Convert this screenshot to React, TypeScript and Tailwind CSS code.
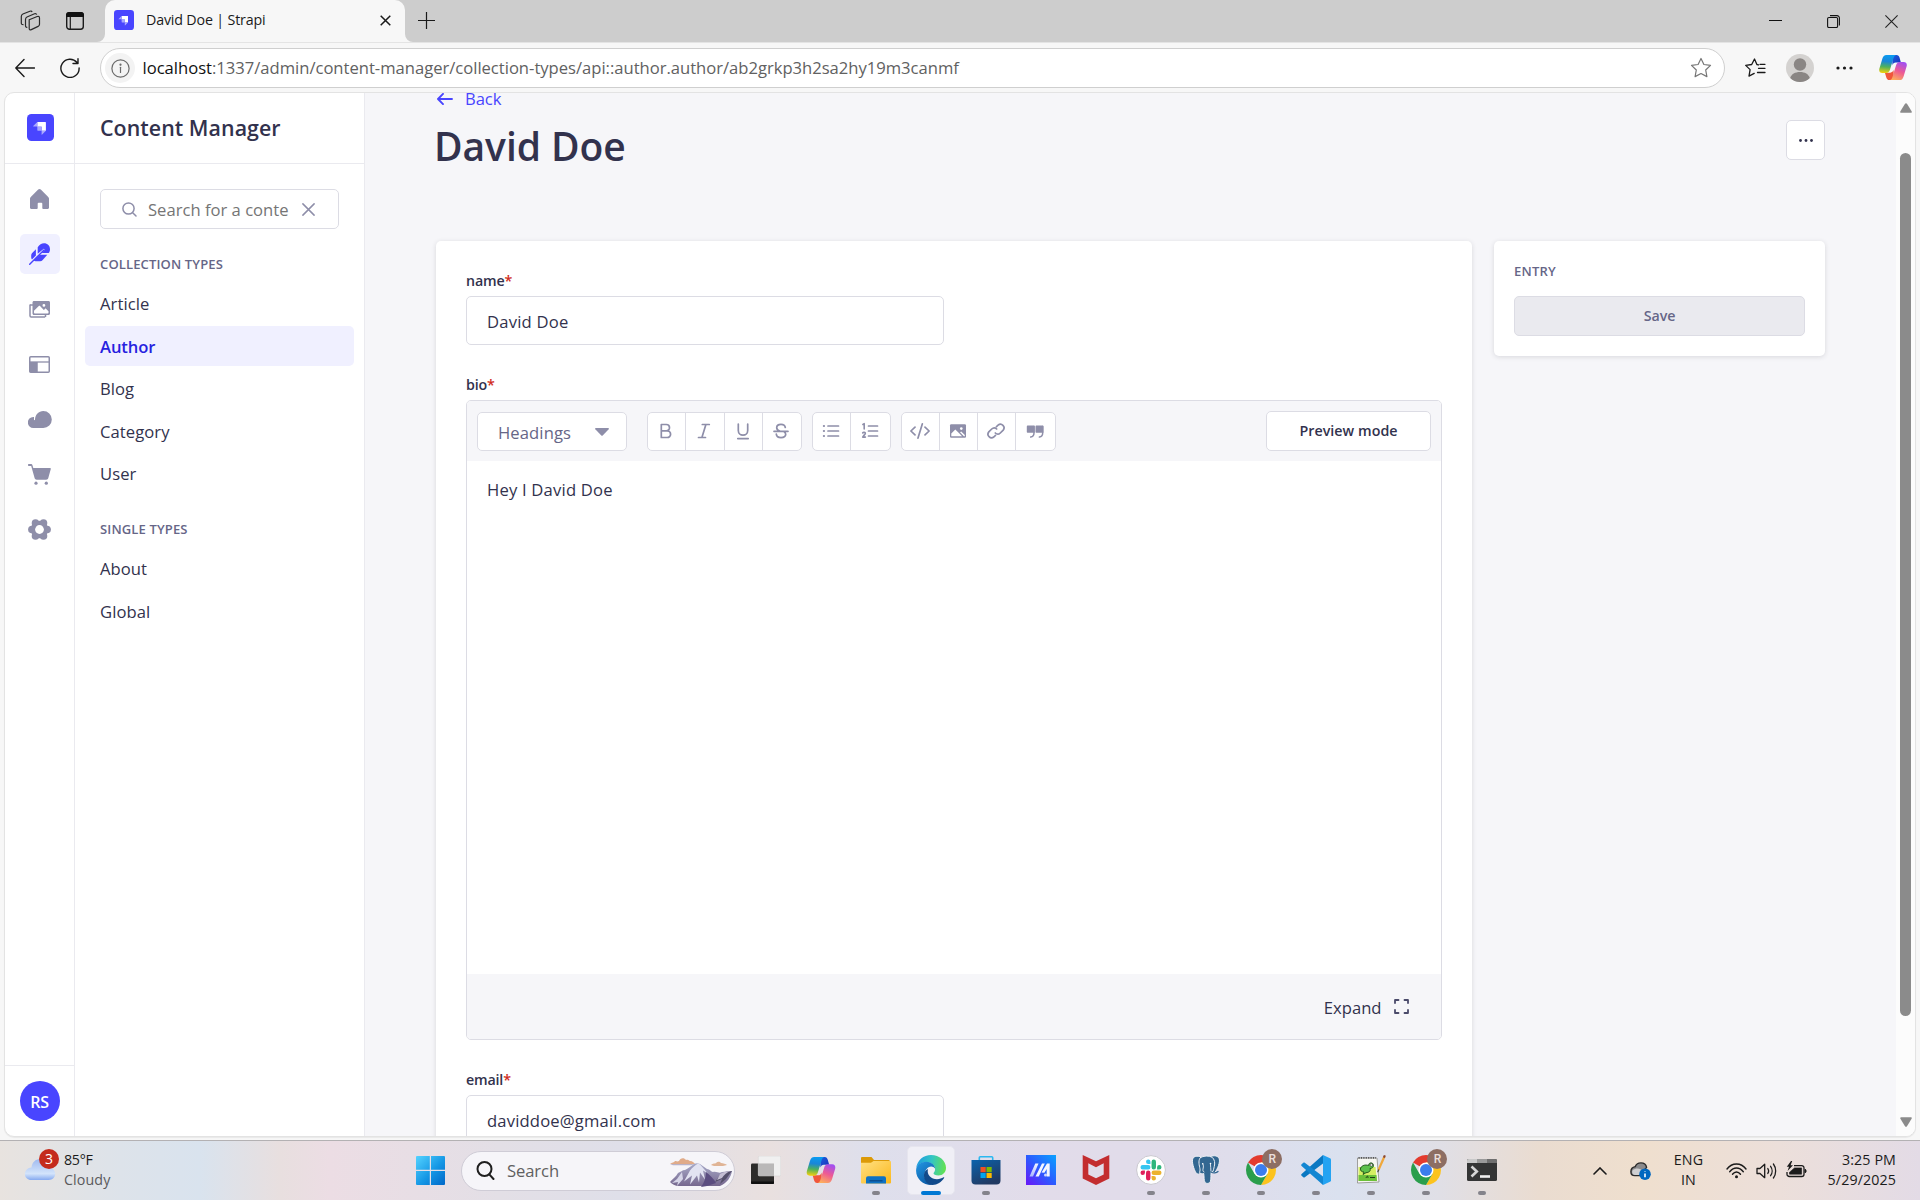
import React from "react";

/* ---------- shared logos ---------- */

function StrapiLogo({ className }: { className: string }) {
  return (
    <svg className={className} viewBox="0 0 27 27">
      <rect width="27" height="27" rx="4.500" fill="#4945ff" />
      <path d="M10.300 8.100h8.100c.3 0 .5.200.5.500v8.200h-4.300v-4.100h-4.300z" fill="#fff" />
      <path d="M10.300 8.100v4.400H6.400c-.3 0-.4-.3-.2-.4z" fill="#a9a7ff" />
      <path d="M14.600 16.800h4.300l-4 4c-.1.100-.3.100-.3-.2z" fill="#a9a7ff" />
      <path d="M10.300 12.600h4.100c.1 0 .2.100.2.200v4h-3.800c-.3 0-.5-.2-.5-.5z" fill="#a9a7ff" />
    </svg>
  );
}

function Copilot({ id, className }: { id: string; className: string }) {
  return (
    <svg className={className} viewBox="0 0 30 28">
      <defs>
        <linearGradient id={`${id}a`} x1=".4" y1="0" x2=".3" y2="1">
          <stop offset="0" stopColor="#0a9bf0" />
          <stop offset=".35" stopColor="#1a86d8" />
          <stop offset=".65" stopColor="#4eb15c" />
          <stop offset="1" stopColor="#f5cf0c" />
        </linearGradient>
        <linearGradient id={`${id}b`} x1=".7" y1="0" x2=".3" y2="1">
          <stop offset="0" stopColor="#a24ff0" />
          <stop offset=".5" stopColor="#ee5a93" />
          <stop offset="1" stopColor="#fdae5c" />
        </linearGradient>
        <linearGradient id={`${id}c`} x1="0" y1="0" x2="1" y2="1">
          <stop offset="0" stopColor="#1b5fdf" />
          <stop offset="1" stopColor="#1a2fb8" />
        </linearGradient>
      </defs>
      <path d="M14 0h4.800c1.800 0 2.700 1.200 3.200 2.800L23.500 8H18c-2 0-3 1-3.600 3z" fill={`url(#${id}c)`} />
      <path d="M16 27H11c-1.800 0-2.700-1.200-3.200-2.800L6.300 19h5.700c2 0 3-1 3.600-3z" fill="#f0563b" />
      <path d="M8 0h10.500c-1.700.3-2.400 1.800-3 3.600l-3.700 12.100c-.7 2.300-1.900 3.700-4.200 3.700H3.500C.9 19.400-.4 17.500.3 14.800L3.600 3.900C4.400 1.400 5.500 0 8 0z" fill={`url(#${id}a)`} />
      <path d="M22 27H11.500c1.700-.3 2.400-1.800 3-3.600l3.700-12.100c.7-2.300 1.900-3.700 4.200-3.700h4.100c2.600 0 3.900 1.900 3.200 4.600l-3.300 10.900c-.8 2.500-1.900 3.900-4.400 3.900z" fill={`url(#${id}b)`} />
    </svg>
  );
}

/* ---------- browser chrome ---------- */

function TabStrip() {
  return (
    <div className="flex h-[42px] items-center bg-[#cdcdcd]">
      <div className="mb-px flex w-[105px] items-center pl-5">
        <svg className="size-[21px]" viewBox="0 0 21 21" fill="none" stroke="#2b2b2b" strokeWidth="1.200">
          <path d="M9.200 9.800l8-3.300c1.300-.5 2.300 0 2.300 1.400v6.300c0 1-.5 1.700-1.400 2.200l-6.800 3.200c-1.300.6-2.100.1-2.100-1.200z" />
          <path d="M7.300 17.300c-1.100.2-1.800-.3-1.800-1.500V9.500c0-1.300.5-2 1.500-2.500l7.500-3.200c1-.4 1.900-.1 2.200.9" />
          <path d="M3.500 14.700c-1.500.1-2.200-.4-2.200-1.700V6.600c0-1.300.5-2.100 1.600-2.600l7-2.800c1-.4 1.800-.2 2.200.8" />
        </svg>
        <svg className="ml-[25px] size-[18px]" viewBox="0 0 18 18">
          <rect x=".7" y=".7" width="16.600" height="16.600" rx="2.800" fill="none" stroke="#1a1a1a" strokeWidth="1.400" />
          <path d="M0 5V3a3 3 0 0 1 3-3h12a3 3 0 0 1 3 3v2z" fill="#111" />
          <path d="M4.300 5v12.500" stroke="#1a1a1a" strokeWidth="1.200" />
        </svg>
      </div>
      <div className="relative flex h-full w-[300px] items-center rounded-t-[10px] bg-[#f7f7f7] pl-[9px]">
        <svg className="absolute bottom-0 -left-2 size-2" viewBox="0 0 8 8"><path d="M8 0v8H0a8 8 0 0 0 8-8z" fill="#f7f7f7" /></svg>
        <svg className="absolute bottom-0 -right-2 size-2" viewBox="0 0 8 8"><path d="M0 0v8h8a8 8 0 0 1-8-8z" fill="#f7f7f7" /></svg>
        <StrapiLogo className="mb-0.5 size-5" />
        <span className="mb-0.5 ml-[12px] w-[234px] text-[14.25px] tracking-[-0.17px] text-[#1b1b1b]">David Doe | Strapi</span>
        <svg className="mb-px size-[11px]" viewBox="0 0 11 11" stroke="#1a1a1a" strokeWidth="1.500"><path d="M.7.700l9.600 9.600M10.300.7L.7 10.300" /></svg>
      </div>
      <svg className="mb-0.5 ml-[13px] size-[17px]" viewBox="0 0 17 17" stroke="#1a1a1a" strokeWidth="1.200"><path d="M8.500 0v17M0 8.500h17" /></svg>
      <div className="ml-auto flex items-center pr-[22px]">
        <svg className="size-[13px]" viewBox="0 0 13 13" stroke="#111" strokeWidth="1"><path d="M0 5.500h13" /></svg>
        <svg className="ml-[45px] size-[13px]" viewBox="0 0 13 13" fill="none" stroke="#111" strokeWidth="1.100">
          <rect x=".6" y="2.500" width="10" height="10" rx="1.300" />
          <path d="M3 .6h7a2.400 2.400 0 0 1 2.400 2.400v7.500" />
        </svg>
        <svg className="ml-[45px] size-[13px]" viewBox="0 0 13 13" stroke="#222" strokeWidth="1.100"><path d="M.4.400l12.200 12.200M12.600.4L.4 12.600" /></svg>
      </div>
    </div>
  );
}

function AddressBar() {
  return (
    <div className="flex h-[50px] items-center border-t border-[#e4e4e4] pl-[15px] pt-px">
      <svg className="size-5" viewBox="0 0 20 20" fill="none" stroke="#1a1a1a" strokeWidth="1.400" strokeLinecap="round" strokeLinejoin="round">
        <path d="M9 1.500L.8 10 9 18.500M.8 10H19.500" />
      </svg>
      <svg className="ml-[25px] size-5" viewBox="0 0 20 20" fill="none" stroke="#1a1a1a" strokeWidth="1.400" strokeLinecap="round" strokeLinejoin="round">
        <path d="M17 4.500A9.100 9.100 0 1 0 19.100 10M18 .8v4.700h-5" />
      </svg>
      <div className="ml-5 flex h-10 w-[1625px] items-center rounded-full border border-[#cfcfcf] bg-white pl-1">
        <span className="flex size-[30px] items-center justify-center rounded-full bg-[#f3f3f3]">
          <svg className="size-[19px]" viewBox="0 0 19 19" fill="none" stroke="#6a6a6a" strokeWidth="1.200">
            <circle cx="9.500" cy="9.500" r="8.600" />
            <path d="M9.500 8.300v5.200" strokeLinecap="round" />
            <circle cx="9.500" cy="5.700" r=".5" fill="#6a6a6a" />
          </svg>
        </span>
        <span className="ml-[7.500px] whitespace-nowrap text-[16.625px] font-[380] tracking-[-0.015px] text-[#616161]">
          <span className="text-[#111]">localhost</span>:1337/admin/content-manager/collection-types/api::author.author/ab2grkp3h2sa2hy19m3canmf
        </span>
        <svg className="ml-auto mr-[12px] size-[22px]" viewBox="0 0 22 22" fill="none" stroke="#767676" strokeWidth="1.200" strokeLinejoin="round">
          <path d="M11 1.500l2.900 6 6.600.9-4.800 4.600 1.200 6.600L11 16.500l-5.900 3.100 1.200-6.600L1.500 8.400l6.600-.9z" />
        </svg>
      </div>
      <svg className="ml-[19px] h-5 w-[22px]" viewBox="0 0 22 20" fill="none" stroke="#1a1a1a" strokeWidth="1.300" strokeLinejoin="round" strokeLinecap="round">
        <path d="M14.500 6.900l-1.600-.4L10.500 1 7.700 6.500l-6 .9 4.400 4.200-1.100 6.500 5.200-2.700M14.500 10.300h6.500M13.500 14.500h7.500M16 6.300h5" />
      </svg>
      <svg className="ml-5 size-[28px]" viewBox="0 0 28 28">
        <circle cx="14" cy="14" r="14" fill="#d4d2d0" />
        <circle cx="14" cy="10.500" r="6.200" fill="#8a8684" />
        <path d="M4.200 24C5.500 20 9 18 14 18s8.500 2 9.800 6a14 14 0 0 1-19.600 0z" fill="#8a8684" />
      </svg>
      <svg className="ml-[22px] h-1 w-[17px]" viewBox="0 0 17 4" fill="#1a1a1a"><circle cx="2" cy="2" r="1.600" /><circle cx="8.500" cy="2" r="1.600" /><circle cx="15" cy="2" r="1.600" /></svg>
      <Copilot id="bar" className="ml-[26px] h-[26px] w-[28px]" />
    </div>
  );
}

/* ---------- admin panel ---------- */

const railIcons: React.ReactNode[] = [
  <svg key="home" className="h-5 w-[19px]" viewBox="0 0 19 20"><path d="M9.500 0c.5 0 .9.200 1.300.6l7.200 7.100c.6.600 1 1.100 1 2.100V18.500c0 .9-.6 1.500-1.500 1.500h-4.300c-.6 0-.9-.3-.9-.9v-4.400c0-.6-.3-.9-.9-.9H8.600c-.6 0-.9.3-.9.900v4.400c0 .6-.3.900-.9.900H1.500C.6 20 0 19.400 0 18.500V9.800c0-1 .4-1.500 1-2.100L8.200.6c.4-.4.800-.6 1.300-.6z" fill="#8e8ea9" /></svg>,
  <svg key="feather" className="h-[22px] w-[21px]" viewBox="0 0 21 22">
    <path d="M.7 21.300L15 7" stroke="#4945ff" strokeWidth="1.400" strokeLinecap="round" />
    <g fill="#4945ff">
      <path d="M8.700 10.800V4.300C10.500 1.500 12.500.300 15 .300c3.500 0 6 2.600 6 5.900 0 1.400-.4 2.600-1.300 3.800h-7.200l3.300-3.300-1-1z" />
      <path d="M6.900 6.200v6.400L3 16.500c-.6-.6-.8-1.300-.8-2.300v-1.800c0-1 .3-1.700 1-2.400z" />
      <path d="M10.700 11.700h7.600l-4.600 5.400c-.7.8-1.600 1.200-2.600 1.200H7.300c-1.300 0-2-.2-2.700-.7z" />
    </g>
  </svg>,
  <svg key="media" className="h-[17px] w-[21px]" viewBox="0 0 21 17">
    <path d="M1 3.500v11.300c0 .8.400 1.200 1.200 1.200h14" fill="none" stroke="#8e8ea9" strokeWidth="1.500" />
    <path d="M1 4h3M16.500 16v-2" fill="none" stroke="#8e8ea9" strokeWidth="1.500" />
    <path fillRule="evenodd" d="M5 0h14.500c.9 0 1.500.6 1.500 1.500v11c0 .9-.6 1.500-1.500 1.500H5c-.9 0-1.500-.6-1.500-1.500v-11C3.500.6 4.100 0 5 0zm0 9.800v1.900c0 .5.300.8.800.8h12.900c.5 0 .8-.3.800-.8v-1.500l-2.300-2.300c-.4-.4-.8-.4-1.200 0l-1.200 1.200L11 5c-.4-.4-.8-.4-1.200 0zM14.900 3a1.400 1.400 0 1 0 0 2.800 1.400 1.400 0 0 0 0-2.800z" fill="#8e8ea9" />
  </svg>,
  <svg key="layout" className="h-[17px] w-[21px]" viewBox="0 0 21 17">
    <rect x=".75" y=".75" width="19.500" height="15.500" rx="1" fill="none" stroke="#8e8ea9" strokeWidth="1.500" />
    <path d="M.7 6h19.600" stroke="#8e8ea9" strokeWidth="1.300" />
    <rect x=".75" y="6" width="8" height="10.300" fill="#8e8ea9" />
  </svg>,
  <svg key="cloud" className="h-[17px] w-6" viewBox="0 0 24 17">
    <path d="M15.300 0a8.500 8.500 0 0 1 0 17H5.500A5.500 5.500 0 0 1 5.300 5.900L6 5.900V8.700c0 .6.900.6 1 0C7.100 3.800 10.700 0 15.300 0z" fill="#8e8ea9" />
  </svg>,
  <svg key="cart" className="h-[21px] w-[23px]" viewBox="0 0 23 21" fill="#8e8ea9">
    <path d="M.6 0h2.600c.6 0 1 .3 1.200.9L5.300 4H22c.7 0 1 .4.800 1l-2.500 9c-.3 1.100-1 1.700-2.200 1.700H8.700c-1.100 0-1.800-.6-2.100-1.700L3.200 1.900H.6C-.2 1.900-.2 0 .6 0z" />
    <circle cx="8" cy="19.200" r="1.600" /><circle cx="18.300" cy="19.200" r="1.600" />
  </svg>,
  <svg key="cog" className="size-[23px]" viewBox="0 0 23 23" fill="#8e8ea9">
    <circle cx="11.500" cy="11.500" r="8.700" />
    <circle cx="3.900" cy="11.500" r="3.800" /><circle cx="19.100" cy="11.500" r="3.800" />
    <circle cx="7.500" cy="5" r="3.800" /><circle cx="15.500" cy="5" r="3.800" />
    <circle cx="7.500" cy="18" r="3.800" /><circle cx="15.500" cy="18" r="3.800" />
    <circle cx="11.500" cy="11.500" r="4.400" fill="#fff" />
  </svg>,
];

function Rail() {
  return (
    <div className="flex w-[70px] shrink-0 flex-col border-r border-[#eaeaef]">
      <div className="flex h-[71px] items-center justify-center border-b border-[#eaeaef] pb-px pl-px">
        <StrapiLogo className="size-[27px]" />
      </div>
      <nav className="flex flex-col items-center gap-[15px] pt-[15px]">
        {railIcons.map((icon, i) => (
          <div key={i} className={i === 1 ? "flex size-10 items-center justify-center rounded-[5px] bg-[#f0f0ff]" : "flex size-10 items-center justify-center"}>
            {icon}
          </div>
        ))}
      </nav>
      <div className="mt-auto flex h-[71px] items-center justify-center border-t border-[#eaeaef]">
        <div className="flex size-10 items-center justify-center rounded-full bg-[#4945ff] pt-px text-[16px] font-semibold tracking-[-0.2px] text-white">RS</div>
      </div>
    </div>
  );
}

function NavGroup({ title, items, active }: { title: string; items: string[]; active?: string }) {
  return (
    <div>
      <h3 className="pl-[15px] text-[13.06px] leading-5 font-[560] tracking-[0.12px] text-[#666687]">{title}</h3>
      <ul className="mt-[9.500px] flex flex-col gap-[2.500px]">
        {items.map((item) => (
          <li
            key={item}
            className={
              item === active
                ? "flex h-10 items-center rounded-[5px] bg-[#f0f0ff] pt-0.5 pl-[15px] text-[16.625px] font-semibold tracking-[-0.1px] text-[#271fe0]"
                : "flex h-10 items-center pt-[2.600px] pl-[15px] text-[16.625px] font-[380] tracking-[0.07px] text-[#32324d]"
            }
          >
            {item}
          </li>
        ))}
      </ul>
    </div>
  );
}

function SideNav() {
  return (
    <div className="flex w-[290px] shrink-0 flex-col border-r border-[#eaeaef]">
      <div className="flex h-[71px] items-center border-b border-[#eaeaef] pl-[25px]">
        <h2 className="text-[21.375px] font-[580] tracking-[0.05px] text-[#32324d]">Content Manager</h2>
      </div>
      <div className="mt-[25px] ml-[25px] flex h-10 w-[239px] items-center rounded-[5px] border border-[#dcdce4]">
        <svg className="ml-[21px] size-[15px]" viewBox="0 0 15 15" fill="none" stroke="#8e8ea9" strokeWidth="1.500" strokeLinecap="round"><circle cx="6.500" cy="6.500" r="5.600" /><path d="M10.700 10.700L14 14" /></svg>
        <span className="ml-[11px] w-[141px] overflow-hidden whitespace-nowrap pt-0.5 text-[16.625px] font-[380] text-[#757575]">Search for a conte</span>
        <svg className="ml-[12.500px] size-[13px]" viewBox="0 0 13 13" stroke="#8e8ea9" strokeWidth="1.500" strokeLinecap="round"><path d="M.9.900l11.200 11.200M12.100.9L.9 12.100" /></svg>
      </div>
      <div className="mt-[25px] flex flex-col gap-[25.500px] px-2.5">
        <NavGroup title="COLLECTION TYPES" items={["Article", "Author", "Blog", "Category", "User"]} active="Author" />
        <NavGroup title="SINGLE TYPES" items={["About", "Global"]} />
      </div>
    </div>
  );
}

function Label({ text }: { text: string }) {
  return (
    <div className="text-[14.25px] leading-5 font-[570] tracking-[-0.17px] text-[#32324d]">
      {text}<span className="text-[#d02b20]">*</span>
    </div>
  );
}

function ToolGroup({ children }: { children: React.ReactNode }) {
  return <div className="flex h-[39px] divide-x divide-[#dcdce4] overflow-hidden rounded-[5px] border border-[#dcdce4] bg-white">{children}</div>;
}

function Tool({ children }: { children: React.ReactNode }) {
  return (
    <div className="flex w-[38.250px] items-center justify-center pr-px pb-px">
      <svg className="size-5" viewBox="0 0 20 20" fill="none" stroke="#8e8ea9" strokeWidth="1.700" strokeLinecap="round" strokeLinejoin="round">{children}</svg>
    </div>
  );
}

function Editor() {
  return (
    <div className="mt-[5px] flex h-[640px] flex-col overflow-hidden rounded-[5px] border border-[#dcdce4]">
      <div className="flex h-[60px] shrink-0 items-center bg-[#f6f6f9] px-2.5 pt-px">
        <div className="flex h-[39px] w-[150px] items-center rounded-[5px] border border-[#dcdce4] bg-white">
          <span className="ml-5 pt-[3px] text-[16.625px] font-[380] tracking-[0.1px] text-[#666687]">Headings</span>
          <svg className="ml-[24px] h-[8px] w-[14px]" viewBox="0 0 14 8"><path d="M.9 0h12.200c.8 0 1.100.7.600 1.300L7.700 7.500c-.4.400-1 .4-1.400 0L.300 1.300C-.2.700.1 0 .9 0z" fill="#8e8ea9" /></svg>
        </div>
        <div className="ml-5 flex gap-2.5">
          <ToolGroup>
            <Tool><path d="M5.300 3.500v13h6a3.300 3.300 0 0 0 0-6.600h-6 5a3.200 3.200 0 0 0 0-6.400z" /></Tool>
            <Tool><path d="M8.300 3.500h7M4.500 16.500h7M11.900 3.500l-4 13" /></Tool>
            <Tool><path d="M5.300 3v6.500a4.700 4.700 0 0 0 9.400 0V3M4.800 17.600h10.400" /></Tool>
            <Tool><path d="M3 10.300h14M14.300 6.500C14 4.600 12.300 3.400 10 3.400 7.500 3.400 5.700 4.700 5.700 6.700c0 2 1.500 2.900 3.500 3.500M5.300 13.200c.2 2 2 3.400 4.700 3.400 2.800 0 4.700-1.300 4.700-3.300 0-1.300-.7-2.300-1.900-2.900" /></Tool>
          </ToolGroup>
          <ToolGroup>
            <Tool><path d="M7 5h10.500M7 10h10.500M7 15h10.500" /><path d="M2.900 5h.1M2.900 10h.1M2.900 15h.1" strokeWidth="2.200" /></Tool>
            <Tool><path d="M8.500 5h9M8.500 10h9M8.500 15h9" /><path d="M2.900 3.500l1.300-.8v5.300M2.700 12c.6-1.100 2.800-.9 2.600.4-.1.900-1.600 2-2.600 3.700h2.700" strokeWidth="1.600" /></Tool>
          </ToolGroup>
          <ToolGroup>
            <Tool><path d="M5 6.200L.9 10 5 13.800M15 6.200l4.100 3.800L15 13.800M12.300 2.900L8 17.100" /></Tool>
            <Tool><rect x="2" y="3.200" width="16" height="13.600" rx="1.200" fill="#8e8ea9" stroke="none" /><path d="M3.300 15.300v-2.800l4-4L11.400 12.600l2.700 2.700zM12 11.200l1.200-.8 3.600 3.600v1.300h-.9z" fill="#fff" stroke="none" /><circle cx="13.300" cy="7.600" r="1.300" fill="#fff" stroke="none" /></Tool>
            <Tool><path d="M10.500 5.700l1.700-1.700a3.600 3.600 0 0 1 5 5.100L14.300 12a3.600 3.600 0 0 1-5 0M9.500 14.300L7.800 16a3.600 3.600 0 0 1-5-5.100L5.700 8a3.600 3.600 0 0 1 5 0" /></Tool>
            <Tool><path d="M9 5.500v6.300c0 2.500-1.400 4-3.300 4.300M17.700 5.500v6.300c0 2.500-1.400 4-3.300 4.300" strokeWidth="1.500" /><path d="M2.800 4.400H9.200c.3 0 .5.200.5.500v6.800H2.900c-.7 0-1.100-.4-1.100-1V5.500c0-.7.400-1.100 1-1.100zM11.500 4.400h6.400c.3 0 .5.200.5.500v6.800h-6.800c-.7 0-1.100-.4-1.100-1V5.500c0-.7.400-1.100 1-1.100z" fill="#8e8ea9" stroke="none" /></Tool>
          </ToolGroup>
        </div>
        <div className="mb-px ml-auto flex h-10 w-[165px] items-center justify-center rounded-[5px] border border-[#dcdce4] bg-white text-[14.25px] font-[580] tracking-[0.05px] text-[#32324d]">Preview mode</div>
      </div>
      <div className="flex-1 bg-white pt-4 pl-5 text-[16.625px] leading-[26px] font-[380] tracking-[0.2px] text-[#32324d]">Hey I David Doe</div>
      <div className="flex h-[65px] shrink-0 items-center justify-end bg-[#f6f6f9] pr-[32.500px]">
        <span className="pt-[3px] text-[16.625px] font-[380] text-[#32324d]">Expand</span>
        <svg className="mb-px ml-3 size-[15px]" viewBox="0 0 15 15" fill="none" stroke="#4a4a6a" strokeWidth="1.800" strokeLinecap="round" strokeLinejoin="round"><path d="M1 4V1h3.500M10.500 1H14v3M14 11v3h-3.500M4.500 14H1v-3" /></svg>
      </div>
    </div>
  );
}

function MainPane() {
  return (
    <main className="min-w-0 flex-1 overflow-hidden bg-[#f6f6f9] pl-[71px]">
      <div className="-mt-1.5 flex h-6 items-center gap-[12px] text-[16.625px] font-[380] tracking-[-0.05px] text-[#4945ff]">
        <svg className="ml-px h-3 w-4" viewBox="0 0 16 12" fill="none" stroke="#4945ff" strokeWidth="1.900" strokeLinecap="round" strokeLinejoin="round"><path d="M6 .9L1 6l5 5.100M1.200 6H15" /></svg>
        Back
      </div>
      <div className="mt-[9px] flex h-[50px] w-[1389px] items-start justify-between">
        <h1 className="-ml-[2px] text-[39px] leading-[52px] font-[590] tracking-[-0.05px] text-[#32324d]">David Doe</h1>
        <div className="flex h-10 w-[39px] items-center justify-center rounded-[5px] border border-[#dcdce4] bg-white">
          <svg className="h-[3px] w-[14px]" viewBox="0 0 14 3" fill="#32324d"><circle cx="1.500" cy="1.500" r="1.400" /><circle cx="7" cy="1.500" r="1.400" /><circle cx="12.500" cy="1.500" r="1.400" /></svg>
        </div>
      </div>
      <div className="mt-[71px] flex items-start gap-[22px]">
        <section className="h-[960px] w-[1036px] rounded-[5px] bg-white px-[30px] pt-[30px] shadow-[0_1px_5px_rgba(33,33,52,0.14)]">
          <Label text="name" />
          <div className="mt-[5px] flex h-[49px] w-[478px] items-center rounded-[5px] border border-[#dcdce4] pt-[3px] pl-5 text-[16.625px] font-[380] tracking-[0.2px] text-[#32324d]">David Doe</div>
          <div className="mt-[30px]"><Label text="bio" /></div>
          <Editor />
          <div className="mt-[30px]"><Label text="email" /></div>
          <div className="mt-[5px] flex h-[49px] w-[478px] items-center rounded-[5px] border border-[#dcdce4] pt-[3px] pl-5 text-[16.625px] font-[380] tracking-[0.16px] text-[#32324d]">daviddoe@gmail.com</div>
        </section>
        <aside className="h-[115px] w-[331px] rounded-[5px] bg-white px-5 pt-5 shadow-[0_1px_5px_rgba(33,33,52,0.14)]">
          <h2 className="text-[13.06px] leading-5 font-[560] tracking-[0.2px] text-[#666687]">ENTRY</h2>
          <div className="mt-[15px] flex h-10 items-center justify-center rounded-[5px] border border-[#dcdce4] bg-[#eaeaef] text-[14.25px] font-[570] tracking-[-0.1px] text-[#666687]">Save</div>
        </aside>
      </div>
    </main>
  );
}

function ScrollBar() {
  return (
    <div className="flex w-[19px] shrink-0 flex-col items-center bg-[#fcfcfc] pt-[10px] pb-[9px]">
      <svg className="h-[10px] w-3" viewBox="0 0 12 10"><path d="M5 .8c.5-.8 1.500-.8 2 0l4.600 7.400c.5.900.1 1.600-.9 1.600H1.300C.300 9.800-.1 9.100.4 8.200z" fill="#8b8b8b" /></svg>
      <div className="mt-10 h-[863px] w-[11px] rounded-full bg-[#8b8b8b]" />
      <svg className="mt-auto h-[10px] w-3" viewBox="0 0 12 10"><path d="M5 9.200c.5.800 1.500.8 2 0l4.600-7.400c.5-.9.1-1.600-.9-1.600H1.300C.300.200-.1.900.4 1.800z" fill="#8b8b8b" /></svg>
    </div>
  );
}

/* ---------- taskbar ---------- */

function WindowsLogo() {
  return (
    <svg className="size-[29px]" viewBox="0 0 29 29">
      <defs><linearGradient id="win" x1="0" y1="0" x2="29" y2="29" gradientUnits="userSpaceOnUse"><stop offset="0" stopColor="#55d3ff" /><stop offset=".55" stopColor="#1597e5" /><stop offset="1" stopColor="#0067c8" /></linearGradient></defs>
      <path d="M1 0h12.800v13.800H0V1a1 1 0 0 1 1-1zM15 0h13a1 1 0 0 1 1 1v12.800H15zM0 15h13.800v14H1a1 1 0 0 1-1-1zM15 15h14v13a1 1 0 0 1-1 1H15z" fill="url(#win)" />
    </svg>
  );
}

function Mountains() {
  return (
    <svg className="h-[31px] w-[62px]" viewBox="0 0 62 31">
      <defs><linearGradient id="mt" x1="0" y1="0" x2="0" y2="1"><stop offset="0" stopColor="#a9abc9" /><stop offset="1" stopColor="#76688f" /></linearGradient></defs>
      <path d="M0 7c2-2 4-1 5-3 2 0 2 1 4 0 1-3 5-4 7-1 3-1 3 1 4 1 3 0 4 2 5 3z" fill="#e0ab89" />
      <path d="M0 7h25l-4 1.300H3z" fill="#b9b3c9" />
      <path d="M41 8c2-2 4-1 5-2 2-2 4-1 5 0 2 0 5 1 6 2l-4 1h-9z" fill="#e0b495" />
      <path d="M0 25c2-3 6-5 8-9 3-1 4-3 7-3 4-2 6-4 9-6 2-1 4-1 6 0l7 5c3 0 4 3 6 3 4-1 6 2 9 0 4 0 6-1 10-1-1 6-5 12-12 15H9c-4 0-7-2-9-4z" fill="url(#mt)" />
      <path d="M28 6.500c-3 2-6 4-8 7l-6 11 8-6-2 9 7-9 2 7 1-10 5 7-2-9 5 3-8-9z" fill="#e2e3f2" />
      <path d="M12 15l-5 7-5 4 6-1-1 4 6-7z" fill="#d6d5e8" />
      <path d="M62 14c-5 0-8 1-12 4l-5 7 7-3-2 5 6-5z" fill="#55506b" />
      <path d="M50 17c3-2 7-3 11-3-4 1-7 4-9 7l-5 2z" fill="#c3bdd2" />
      <path d="M36 15c4 3 8 7 10 11l-9 3-6 1c3-4 5-9 5-15z" fill="#5b4d80" />
    </svg>
  );
}

function TaskView() {
  return (
    <svg className="h-7 w-[30px]" viewBox="0 0 30 28">
      <rect x="0" y="7.500" width="23" height="20.500" rx="1.200" fill="#2c2b2a" />
      <path d="M0 25.500h23V27a1 1 0 0 1-1 1H1a1 1 0 0 1-1-1z" fill="#0f0f0f" />
      <rect x="7.300" y="0" width="22.500" height="20" rx="1.200" fill="#f0f0f0" fillOpacity=".95" stroke="#d3d3d3" strokeWidth=".5" />
      <path d="M7.300 7.500H23V20H8.300a1 1 0 0 1-1-1z" fill="#b9b8b8" />
    </svg>
  );
}

function Folder() {
  return (
    <svg className="h-[27px] w-[30px]" viewBox="0 0 30 27">
      <defs><linearGradient id="fo" x1="0" y1="0" x2="1" y2="1"><stop offset="0" stopColor="#ffe083" /><stop offset="1" stopColor="#fbb81c" /></linearGradient></defs>
      <path d="M1 0h9.500l2.500 3h15.500v4H0V1a1 1 0 0 1 1-1z" fill="#dc9a08" />
      <path d="M0 5.700h10L12.500 4H29a1 1 0 0 1 1 1v20.500a1 1 0 0 1-1 1H1a1 1 0 0 1-1-1z" fill="url(#fo)" />
      <path d="M5 26.500v-5.300a2 2 0 0 1 2-2h16a2 2 0 0 1 2 2v5.300z" fill="#0f72c4" />
      <path d="M8.500 23h13v1.500h-13z" fill="#0a4f92" />
    </svg>
  );
}

function EdgeLogo() {
  return (
    <svg className="size-[30px]" viewBox="0 0 30 30">
      <defs>
        <linearGradient id="ea" x1="0" y1=".4" x2="1" y2=".5"><stop offset="0" stopColor="#1d9be0" /><stop offset=".5" stopColor="#33c5c4" /><stop offset="1" stopColor="#63e24f" /></linearGradient>
        <linearGradient id="eb" x1="0" y1="0" x2=".6" y2="1"><stop offset="0" stopColor="#2298e4" /><stop offset="1" stopColor="#0c59a4" /></linearGradient>
      </defs>
      <path d="M.2 13C1.200 5.300 7.500 0 15 0c8.500 0 15 6 15 12.800 0 4.700-3.300 7.700-7.500 7.700-3.300 0-5-1.200-5-2.200 0-.7 1.600-1.600 1.600-4C19 10 15 7 10.500 7 6 7 2 9.300.2 13z" fill="url(#ea)" />
      <path d="M.1 15C.500 9.500 5 6.700 10.300 6.700c4.800 0 8.600 3 8.800 6.800-1-1.300-2.300-2-3.900-2-3.700 0-6.700 4.200-6.700 8.800 0 4.500 3.300 8.600 8 9.600C7.500 30.500-.3 23.800.1 15z" fill="url(#eb)" />
      <path d="M12 14c-1.600 6 3.200 10.200 9 10.200 2.800 0 4.800-.8 6.500-1.900.5-.3 1 .2.600.7-2.600 4-6.800 6.900-11.600 6.900-5 0-9-4.800-8.500-10.500.2-2.300 1.700-4.400 4-5.400z" fill="#114a8b" />
    </svg>
  );
}

function Store() {
  return (
    <svg className="size-[30px]" viewBox="0 0 30 30">
      <defs><linearGradient id="st" x1="0" y1="0" x2=".5" y2="1"><stop offset="0" stopColor="#0a63ad" /><stop offset="1" stopColor="#213a63" /></linearGradient></defs>
      <path d="M8.300 6V2.800c0-.7.300-1 1-1h11.400c.7 0 1 .3 1 1V6" fill="none" stroke="#2bb8f0" strokeWidth="1.600" />
      <path d="M.5 5h29v20.500a4 4 0 0 1-4 4h-21a4 4 0 0 1-4-4z" fill="url(#st)" />
      <path d="M9.500 12h5.200v5.200H9.500z" fill="#f25022" /><path d="M15.500 12h5.200v5.200h-5.200z" fill="#7fba00" /><path d="M9.500 18h5.200v5H9.500z" fill="#00a4ef" /><path d="M15.500 18h5.200v5h-5.200z" fill="#ffb900" />
    </svg>
  );
}

function MyAsus() {
  return (
    <svg className="size-[30px]" viewBox="0 0 30 30">
      <defs>
        <linearGradient id="ma" x1="0" y1="1" x2="1" y2="0"><stop offset="0" stopColor="#6a16f7" /><stop offset=".5" stopColor="#2b5cff" /><stop offset="1" stopColor="#0aa2ff" /></linearGradient>
        <linearGradient id="mb" x1="0" y1="0" x2="0" y2="1"><stop offset="0" stopColor="#f4f6ff" /><stop offset="1" stopColor="#a9b6ff" /></linearGradient>
      </defs>
      <rect width="30" height="30" fill="url(#ma)" />
      <path d="M3.500 21.500L9.300 8.500h3.200L7 21.500z" fill="url(#mb)" />
      <path d="M9.500 21.500L16 8.500h2.800L12.800 21.500z" fill="#f4f6ff" />
      <path d="M15.500 17.500L21 8.500h2.700v13h-3v-7.500l-2.300 3.800z" fill="#f4f6ff" />
      <circle cx="19.500" cy="20" r="1.500" fill="#cfd7ff" />
    </svg>
  );
}

function McAfee() {
  return (
    <svg className="size-[30px]" viewBox="0 0 30 30">
      <path fillRule="evenodd" d="M1.700 0L15 6.200 28.300 0v23.500L15 30 1.700 23.500zM7.300 8.300v11.200L15 23.200l7.700-3.700V8.300L15 12.200z" fill="#c32d2f" />
    </svg>
  );
}

function Slack() {
  return (
    <svg className="size-[30px]" viewBox="0 0 30 30">
      <circle cx="15" cy="15" r="14.400" fill="#fff" stroke="#c4c3cb" strokeWidth=".9" />
      <g transform="translate(4.500 4.500) scale(.875)">
        <path d="M5.042 15.165a2.528 2.528 0 0 1-2.520 2.523A2.528 2.528 0 0 1 0 15.165a2.527 2.527 0 0 1 2.522-2.520h2.520v2.520zM6.313 15.165a2.527 2.527 0 0 1 2.521-2.520 2.527 2.527 0 0 1 2.521 2.520v6.313A2.528 2.528 0 0 1 8.834 24a2.528 2.528 0 0 1-2.521-2.522v-6.313z" fill="#e01e5a" />
        <path d="M8.834 5.042a2.528 2.528 0 0 1-2.521-2.520A2.528 2.528 0 0 1 8.834 0a2.528 2.528 0 0 1 2.521 2.522v2.520H8.834zM8.834 6.313a2.528 2.528 0 0 1 2.521 2.521 2.528 2.528 0 0 1-2.521 2.521H2.522A2.528 2.528 0 0 1 0 8.834a2.528 2.528 0 0 1 2.522-2.521h6.312z" fill="#36c5f0" />
        <path d="M18.956 8.834a2.528 2.528 0 0 1 2.522-2.521A2.528 2.528 0 0 1 24 8.834a2.528 2.528 0 0 1-2.522 2.521h-2.522V8.834zM17.688 8.834a2.528 2.528 0 0 1-2.523 2.521 2.527 2.527 0 0 1-2.520-2.521V2.522A2.527 2.527 0 0 1 15.165 0a2.528 2.528 0 0 1 2.523 2.522v6.312z" fill="#2eb67d" />
        <path d="M15.165 18.956a2.528 2.528 0 0 1 2.523 2.522A2.528 2.528 0 0 1 15.165 24a2.527 2.527 0 0 1-2.520-2.522v-2.522h2.520zM15.165 17.688a2.527 2.527 0 0 1-2.520-2.523 2.526 2.526 0 0 1 2.520-2.520h6.313A2.527 2.527 0 0 1 24 15.165a2.528 2.528 0 0 1-2.522 2.523h-6.313z" fill="#ecb22e" />
      </g>
    </svg>
  );
}

function Elephant() {
  return (
    <svg className="size-[30px]" viewBox="0 0 30 30" strokeLinecap="round" strokeLinejoin="round">
      <g fill="#336791" stroke="#eef1f6" strokeWidth="1">
        <path d="M19.500 1.500c3.500-1.600 7.600-.7 8.700 2.200 1.200 3.300-1.700 10.500-4.200 13.600-1.100 1.300-2.500.3-2.700-1z" />
        <path d="M10 2C6.200.300 2.200 1 1.500 4.800.9 8.200 3.600 17 6 18.800c1.600 1.100 3-.3 4-1.700z" />
        <path d="M9.500 2.500c3-1.800 8.500-2 11.500-.3 2.700 2 3.300 6 2.200 9.500-.5 1.600-.6 3.700-1.300 4.800l-1.700.7c-.6 2.500.1 6.500-.7 9-.8 2.300-3.800 3-5.400 1.200-1.400-1.700-.8-6.100-1.400-9-1.600.9-4 .2-4.200-1.200.8-1.400.6-3 .2-4.700-.8-3.500-1.500-8 .8-10z" />
      </g>
      <path d="M20.500 17.200c1.700 1.200 5 .8 6.500-.7" fill="none" stroke="#336791" strokeWidth="1.300" />
      <path d="M13 17c-1.500-.4-1.200-2.400-.8-4 .3-1.400.3-2.800-.2-3.800M20 16c.2-2.300-.8-4.500-.6-6.800" fill="none" stroke="#eef1f6" strokeWidth=".9" />
      <circle cx="11.700" cy="8.700" r=".8" fill="#fff" /><circle cx="19.500" cy="8.500" r=".8" fill="#fff" />
    </svg>
  );
}

function ChromeLogo() {
  return (
    <div className="relative size-[30px]">
      <svg className="size-[30px]" viewBox="0 0 30 30">
        <path d="M15 15L2.010 7.500A15 15 0 0 1 27.990 7.500L15 7.500z" fill="#e33b2e" />
        <path d="M15 7.500H27.990A15 15 0 0 1 15 30L21.500 18.700 15 15z" fill="#fcc31e" />
        <path d="M15 30A15 15 0 0 1 2.010 7.500L8.500 18.700 15 15l6.500 3.700z" fill="#2a9e4c" />
        <circle cx="15" cy="15" r="7.500" fill="#fff" />
        <circle cx="15" cy="15" r="6" fill="#3b7ded" />
      </svg>
      <span className="absolute -top-1.5 left-4 flex size-5 items-center justify-center rounded-full bg-[#8d6e63] font-[Roboto] text-[12px] font-medium text-[#eadfdb]">R</span>
    </div>
  );
}

function VsCode() {
  return (
    <svg className="size-[30px]" viewBox="0 0 30 30">
      <path d="M22 0v8.500L3.800 22.300c-.5.400-1 .4-1.500 0L.6 20.800c-.6-.5-.6-1.200 0-1.700z" fill="#0a78c2" />
      <path d="M22 30v-8.500L3.800 7.700c-.5-.4-1-.4-1.500 0L.6 9.200c-.6.500-.6 1.200 0 1.700z" fill="#1286d2" />
      <path d="M22 0l7 3.300c.6.300 1 .8 1 1.500v20.400c0 .7-.4 1.200-1 1.500L22 30z" fill="#24a3f2" />
    </svg>
  );
}

function NotepadPlus() {
  return (
    <svg className="size-[30px]" viewBox="0 0 30 30">
      <path d="M1.500 3h19.500l2 24-21.500 1z" fill="#f6f6f2" stroke="#8b8b88" strokeWidth=".8" />
      <path d="M2.500 2.800h17.500" stroke="#555" strokeWidth="1.800" strokeDasharray="1.200 1.200" />
      <path d="M2.500 12h17l1.500 14H2.500z" fill="#d4ee63" />
      <path d="M2.500 20h18l.5 6H2.500z" fill="#6cc13a" />
      <path d="M4.500 13c2-3 5-3.500 8-2.500 0-3.500 5-3.500 5 0 0 2-1.500 2.800-3.500 3 1 2.500-1 4-4 4.200l-3 1.800 1-2.500c-2 0-4-1-3.500-4z" fill="#5cc04a" stroke="#1c4d17" strokeWidth=".9" />
      <circle cx="15.300" cy="10" r="1.300" fill="#fff" stroke="#222" strokeWidth=".6" />
      <path d="M10 23c1-2.500 2-2.500 2 0M14 22.500h5" stroke="#1d3d18" strokeWidth="1" fill="none" />
      <path d="M28.300 1.800L22.500 15" stroke="#f0a83c" strokeWidth="2.200" />
      <path d="M28.900.4l-1 2.200" stroke="#8b4a35" strokeWidth="2.200" />
      <path d="M22.700 14.500l-1 2.800" stroke="#444" strokeWidth="1.200" />
    </svg>
  );
}

function TerminalLogo() {
  return (
    <svg className="h-[22px] w-[30px]" viewBox="0 0 30 22">
      <rect width="30" height="22" rx="1.500" fill="#343535" />
      <path d="M1.500 0H10v4H0V1.500A1.500 1.500 0 0 1 1.500 0z" fill="#c9c9c9" /><path d="M10 0h10v4H10z" fill="#9a9a9a" /><path d="M20 0h8.500A1.500 1.500 0 0 1 30 1.500V4H20z" fill="#6f6f6f" />
      <path d="M4.500 7.500l5.300 5-5.300 5" fill="none" stroke="#d6d6d6" strokeWidth="2.600" />
      <path d="M13 17.500h10" stroke="#f0f0f0" strokeWidth="2.600" />
    </svg>
  );
}

const apps: { icon: React.ReactNode; state: "none" | "open" | "active" }[] = [
  { icon: <TaskView />, state: "none" },
  { icon: <Copilot id="task" className="h-[27px] w-[30px]" />, state: "none" },
  { icon: <Folder />, state: "open" },
  { icon: <EdgeLogo />, state: "active" },
  { icon: <Store />, state: "open" },
  { icon: <MyAsus />, state: "none" },
  { icon: <McAfee />, state: "none" },
  { icon: <Slack />, state: "open" },
  { icon: <Elephant />, state: "open" },
  { icon: <ChromeLogo />, state: "open" },
  { icon: <VsCode />, state: "open" },
  { icon: <NotepadPlus />, state: "open" },
  { icon: <ChromeLogo />, state: "open" },
  { icon: <TerminalLogo />, state: "open" },
];

function Taskbar() {
  return (
    <footer className="flex h-[60px] items-center border-t border-[#b3b1b3] bg-[linear-gradient(90deg,#e8e3df_0px,#dde3ea_120px,#d9e3ee_200px,#e8dfdf_280px,#ecdde4_330px,#e3dfe6_500px,#dfdfe9_620px,#e9e0df_770px,#dedfec_870px,#e2dcea_1040px,#e0dcea_1200px,#dae1ef_1340px,#e0dfe6_1440px,#eadcd0_1540px,#efdfce_1640px,#ecdfda_1780px,#e3dbe6_1920px)] text-[14.25px] text-[#1b1b1b]">
      <div className="flex w-[416px] items-center pl-[24px]">
        <div className="relative mb-1 h-[38px] w-9">
          <svg className="absolute top-[8px] left-0 h-6 w-8" viewBox="0 0 32 24">
            <defs><linearGradient id="cl" x1="0" y1="0" x2="0" y2="1"><stop offset="0" stopColor="#9fb9ef" /><stop offset=".7" stopColor="#d3e4fb" /><stop offset="1" stopColor="#86aaf0" /></linearGradient></defs>
            <path d="M7.500 9.500C8 4.500 11.500 1 16 1c5 0 8.500 3.500 9 8.500 3.500.5 6.200 3 6.200 6.300 0 3.400-2.800 6.200-6.400 6.200H7.200C3.700 22 .9 19.500.9 16c0-3.500 2.800-6.300 6.600-6.500z" fill="url(#cl)" />
          </svg>
          <span className="absolute -top-[1px] left-[15px] flex size-5 items-center justify-center rounded-full bg-[#c42b1c] text-[14px] text-white">3</span>
        </div>
        <div className="mb-0.5 ml-[4px] leading-5"><div className="tracking-[-0.3px]">85°F</div><div className="tracking-[0.12px] text-[#5a5a5c]">Cloudy</div></div>
      </div>
      <WindowsLogo />
      <div className="ml-4 flex h-10 w-[274px] items-center rounded-full border border-[#cfccd6] bg-[#f6f5f9] pl-[14px]">
        <svg className="size-[19px]" viewBox="0 0 19 19" fill="none" stroke="#1f1f1f" strokeWidth="2" strokeLinecap="round"><circle cx="8.500" cy="8" r="7" /><path d="M13.300 13.300L17.500 18" /></svg>
        <span className="ml-3 pt-px text-[16.625px] tracking-[-0.1px] text-[#606060]">Search</span>
        <span className="mt-1 ml-auto mr-[2px]"><Mountains /></span>
      </div>
      <div className="ml-[3px] flex">
        {apps.map(({ icon, state }, i) => (
          <div key={i} className="flex h-[58px] w-[55.080px] justify-center">
            <div className={state === "active" ? "relative mt-1 flex h-[49px] w-12 items-center justify-center rounded-[5px] border border-[#e6e5ee] bg-[#f0eff6]" : "relative mt-1 flex h-[49px] w-12 items-center justify-center"}>
              {icon}
              {state === "active" && <span className="absolute -bottom-px left-[13px] h-1 w-5 rounded-full bg-[#0078d4]" />}
              {state === "open" && <span className="absolute bottom-0 left-5 h-1 w-2 rounded-full bg-[#84838b]" />}
            </div>
          </div>
        ))}
      </div>
      <div className="ml-auto flex items-center pr-6">
        <svg className="h-[8px] w-[14px]" viewBox="0 0 14 8" fill="none" stroke="#1b1b1b" strokeWidth="1.600" strokeLinecap="round"><path d="M1 7l6-6 6 6" /></svg>
        <svg className="ml-[23px] h-[18px] w-[21px]" viewBox="0 0 21 18">
          <path d="M5.300 4.600C6.300 2.100 8.400.9 10.900.9c3 0 5.200 1.900 5.700 4.500l-7 8.200H4.800C2.500 13.600.9 12 .9 9.700c0-2.600 1.900-4.700 4.400-5.100z" fill="#8a8a8c" stroke="#2b2b2b" strokeWidth="1.400" />
          <path d="M5 7c3-1 6 0 8 2l-3 4H5c-3 0-4.500-5 0-6z" fill="#cfcfd1" />
          <circle cx="15" cy="12.200" r="5.800" fill="#0067c0" />
          <path d="M15 11.500v3.800M15 9v.4" stroke="#fff" strokeWidth="1.600" />
        </svg>
        <div className="mb-0.5 ml-[22.500px] w-[30px] text-center leading-5 tracking-[0.2px]"><div>ENG</div><div>IN</div></div>
        <svg className="ml-[22px] h-[16px] w-[21px]" viewBox="0 0 21 16" fill="none" stroke="#1b1b1b" strokeWidth="1.400" strokeLinecap="round">
          <path d="M1 6C6-.7 15-.7 20 6M3.700 8.700c4-5 9.600-5 13.600 0M6.500 11.300c2.300-3 5.700-3 8 0" /><circle cx="10.500" cy="13.700" r="1.500" fill="#1b1b1b" stroke="none" />
        </svg>
        <svg className="ml-[9px] h-[18px] w-[21px]" viewBox="0 0 21 18" fill="none" stroke="#1b1b1b" strokeWidth="1.300" strokeLinecap="round" strokeLinejoin="round">
          <path d="M1 6.500h3L8.700 2.300v13.400L4 11.500H1z" /><path d="M11.800 6.500c1 1.500 1 3.500 0 5M14.600 4.300c2 2.700 2 6.700 0 9.400M17.400 2c3 4 3 10 0 14" />
        </svg>
        <svg className="mb-px ml-[9px] h-[18px] w-[21px]" viewBox="0 0 21 18">
          <path d="M8 4.600h7.700A2.300 2.300 0 0 1 18 6.900v6.300a2.300 2.300 0 0 1-2.300 2.300H3.300A2.300 2.300 0 0 1 1 13.200V11" fill="none" stroke="#1b1b1b" strokeWidth="1.300" />
          <path d="M8.500 6.900h7.100v6.300H3.500v-2z" fill="#1b1b1b" stroke="#1b1b1b" strokeWidth=".6" /><path d="M19 8.300c1.300 0 1.600 3.400 0 3.400z" fill="#1b1b1b" stroke="#1b1b1b" />
          <path d="M5 0L.8 5.800H3L1.600 10 7 4.300H4.600L6.200 0z" fill="#1b1b1b" />
        </svg>
        <div className="mb-0.5 w-[89.500px] text-right leading-5 tracking-[0.1px]"><div>3:25 PM</div><div>5/29/2025</div></div>
      </div>
    </footer>
  );
}

export default function App() {
  return (
    <div className="flex h-[1200px] w-[1920px] flex-col overflow-hidden bg-[#f7f7f7] font-['Open_Sans','Noto_Sans',sans-serif]">
      <TabStrip />
      <AddressBar />
      <div className="mx-[4px] flex h-[1045px] overflow-hidden rounded-[10px] border border-[#e3e3e3] bg-white shadow-[0_1px_1px_rgba(0,0,0,0.06)]">
        <Rail />
        <SideNav />
        <MainPane />
        <ScrollBar />
      </div>
      <div className="mt-auto">
        <Taskbar />
      </div>
    </div>
  );
}
